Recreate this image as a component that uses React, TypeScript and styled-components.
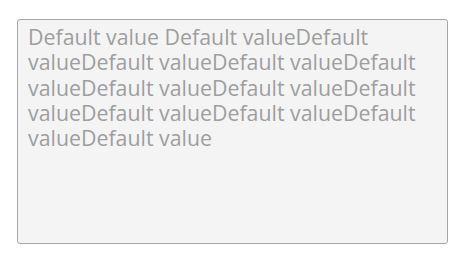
import React from 'react';
import styled, { createGlobalStyle } from 'styled-components';

const GlobalStyle = createGlobalStyle`
  html, body {
    margin: 0;
    padding: 0;
    background: #ffffff;
  }
`;

const Page = styled.div`
  padding: 19px 0 0 17px;
`;

const TextArea = styled.textarea`
  box-sizing: border-box;
  display: block;
  width: 431px;
  height: 225px;
  margin: 0;
  padding: 4px 10px;
  border: 1px solid #a6a6a6;
  border-radius: 3px;
  background: #f4f4f4;
  color: #9e9e9e;
  font-family: 'Open Sans', sans-serif;
  font-size: 21.33px;
  line-height: 25.3px;
  resize: none;
  outline: none;
  overflow: hidden;
`;

const VALUE =
  'Default value Default valueDefault valueDefault valueDefault valueDefault valueDefault valueDefault valueDefault valueDefault valueDefault valueDefault valueDefault value';

const App = () => {
  return (
    <>
      <GlobalStyle />
      <Page>
        <TextArea disabled defaultValue={VALUE} />
      </Page>
    </>
  );
};

export default App;
